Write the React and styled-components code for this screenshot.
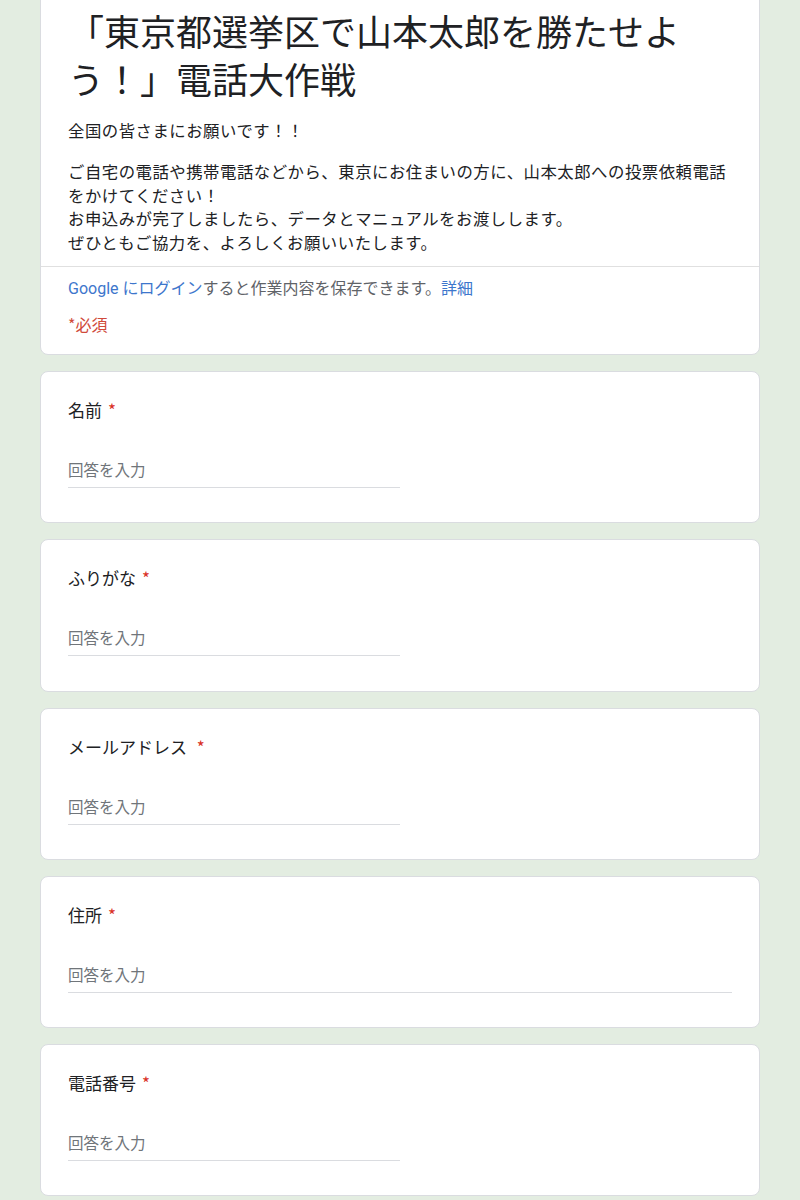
import { createGlobalStyle, styled } from "styled-components";

const GlobalStyle = createGlobalStyle`
  body {
    margin: 0;
    background: #e3ede1;
    font-family: "Noto Sans CJK JP", "Noto Sans", sans-serif;
    color: #202124;
  }
`;

const fields = [
  { label: "名前", wide: false },
  { label: "ふりがな", wide: false },
  { label: "メールアドレス ", wide: false },
  { label: "住所", wide: true },
  { label: "電話番号", wide: false },
];

export default function App() {
  return (
    <>
      <GlobalStyle />
      <Page>
        <HeaderCard>
          <HeaderTop>
            <Title>「東京都選挙区で山本太郎を勝たせよう！」電話大作戦</Title>
            <Description>
              <div>全国の皆さまにお願いです！！</div>
              <Paragraph>
                ご自宅の電話や携帯電話などから、東京にお住まいの方に、山本太郎への投票依頼電話
                <br />
                をかけてください！
                <br />
                お申込みが完了しましたら、データとマニュアルをお渡しします。
                <br />
                ぜひともご協力を、よろしくお願いいたします。
              </Paragraph>
            </Description>
          </HeaderTop>
          <HeaderBottom>
            <LoginLine>
              <Link>Google にログイン</Link>すると作業内容を保存できます。<Link>詳細</Link>
            </LoginLine>
            <Required>*必須</Required>
          </HeaderBottom>
        </HeaderCard>
        {fields.map((f) => (
          <FieldCard key={f.label}>
            <Label>
              {f.label}
              <Star>*</Star>
            </Label>
            <Input placeholder="回答を入力" $wide={f.wide} />
          </FieldCard>
        ))}
      </Page>
    </>
  );
}

const Page = styled.div`
  display: flex;
  flex-direction: column;
  gap: 16px;
  padding: 0 40px 40px;
`;

const Card = styled.div`
  background: #fff;
  border: 1px solid #dadce0;
  border-radius: 8px;
`;

const HeaderCard = styled(Card)`
  margin-top: -20px;
`;

const HeaderTop = styled.div`
  padding: 25px 27px 12px;
  border-bottom: 1.5px solid #e0e0e0;
`;

const Title = styled.h1`
  margin: 0;
  max-width: 640px;
  font-size: 36px;
  line-height: 48px;
  font-weight: 400;
  color: #202124;
`;

const Description = styled.div`
  margin-top: 17px;
  font-size: 16.4px;
  line-height: 23.4px;
  letter-spacing: 0.5px;
  color: #202124;
  text-spacing-trim: space-all;
`;

const Paragraph = styled.div`
  margin-top: 18px;
`;

const HeaderBottom = styled.div`
  padding: 10px 27px 18px;
  display: flex;
  flex-direction: column;
  gap: 11px;
`;

const LoginLine = styled.div`
  font-family: Roboto, "Noto Sans CJK JP", sans-serif;
  font-size: 16px;
  line-height: 24px;
  color: #5f6368;
`;

const Link = styled.span`
  color: #3d76cc;
`;

const Required = styled.div`
  font-size: 16px;
  line-height: 24px;
  color: #d04a3a;
`;

const FieldCard = styled(Card)`
  padding: 26px 27px 34.25px;
  display: flex;
  flex-direction: column;
  gap: 33px;
`;

const Label = styled.div`
  font-size: 17px;
  line-height: 24px;
  color: #202124;
`;

const Star = styled.span`
  color: #d93025;
  margin-left: 6px;
`;

const Input = styled.input`
  width: ${(p) => (p.$wide ? "100%" : "50%")};
  box-sizing: border-box;
  height: 33px;
  padding: 0 0 4px;
  border: none;
  border-bottom: 1.5px solid #dadce0;
  outline: none;
  background: transparent;
  font-family: "Noto Sans CJK JP", sans-serif;
  font-size: 15.5px;
  color: #202124;
  &::placeholder {
    color: #70757a;
  }
`;
